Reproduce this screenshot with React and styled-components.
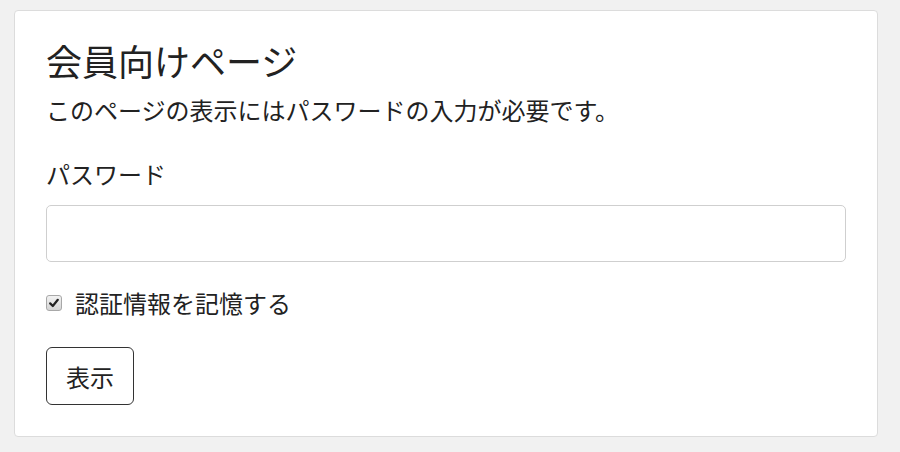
import React, { useState } from 'react';
import styled, { createGlobalStyle } from 'styled-components';

const GlobalStyle = createGlobalStyle`
  html, body {
    margin: 0;
    padding: 0;
    background: #f1f1f1;
  }
  body {
    font-family: "Noto Sans CJK JP", "Noto Sans", sans-serif;
    color: #222;
  }
`;

function App() {
  const [remember, setRemember] = useState(true);

  return (
    <>
      <GlobalStyle />
      <Page>
        <Card>
          <Title>会員向けページ</Title>
          <Lead>このページの表示にはパスワードの入力が必要です。</Lead>
          <FieldLabel htmlFor="pw">パスワード</FieldLabel>
          <Input id="pw" type="password" />
          <CheckRow onClick={() => setRemember(!remember)}>
            <CheckBox>
              {remember && (
                <svg width="10" height="10" viewBox="0 0 10 10">
                  <path d="M1.2 5.4 L3.8 8 L8.8 1.8" fill="none" stroke="#222" strokeWidth="2.2" strokeLinecap="round" strokeLinejoin="round" />
                </svg>
              )}
            </CheckBox>
            <span>認証情報を記憶する</span>
          </CheckRow>
          <Button type="button">表示</Button>
        </Card>
      </Page>
    </>
  );
}

const Page = styled.div`
  padding: 10px 22px 16px 14px;
`;

const Card = styled.div`
  background: #fff;
  border: 1px solid #dcdcdc;
  border-radius: 4px;
  padding: 26px 31px 31px 31px;
  display: flex;
  flex-direction: column;
  align-items: flex-start;
`;

const Title = styled.h1`
  margin: 0;
  font-size: 36px;
  font-weight: 400;
  line-height: 46px;
  color: #222;
`;

const Lead = styled.p`
  margin: 10px 0 0;
  font-size: 24px;
  line-height: 34px;
`;

const FieldLabel = styled.label`
  margin-top: 30px;
  font-size: 24px;
  line-height: 34px;
`;

const Input = styled.input`
  box-sizing: border-box;
  margin-top: 14px;
  width: 100%;
  height: 57px;
  border: 1px solid #cfcfcf;
  border-radius: 5px;
  background: #fff;
  font-size: 20px;
  padding: 0 12px;
  outline: none;
`;

const CheckRow = styled.div`
  margin-top: 24px;
  display: flex;
  align-items: center;
  gap: 13px;
  font-size: 24px;
  line-height: 34px;
  cursor: pointer;
`;

const CheckBox = styled.span`
  box-sizing: border-box;
  width: 16px;
  height: 16px;
  border: 1px solid #a8a8a8;
  border-radius: 3px;
  background: linear-gradient(#f2f2f2, #d4d4d4);
  display: flex;
  align-items: center;
  justify-content: center;
`;

const Button = styled.button`
  margin-top: 27px;
  box-sizing: border-box;
  height: 58px;
  padding: 0 19px;
  border: 1px solid #333;
  border-radius: 6px;
  background: #fff;
  font-family: inherit;
  font-size: 24px;
  color: #222;
  cursor: pointer;
`;

export default App;
